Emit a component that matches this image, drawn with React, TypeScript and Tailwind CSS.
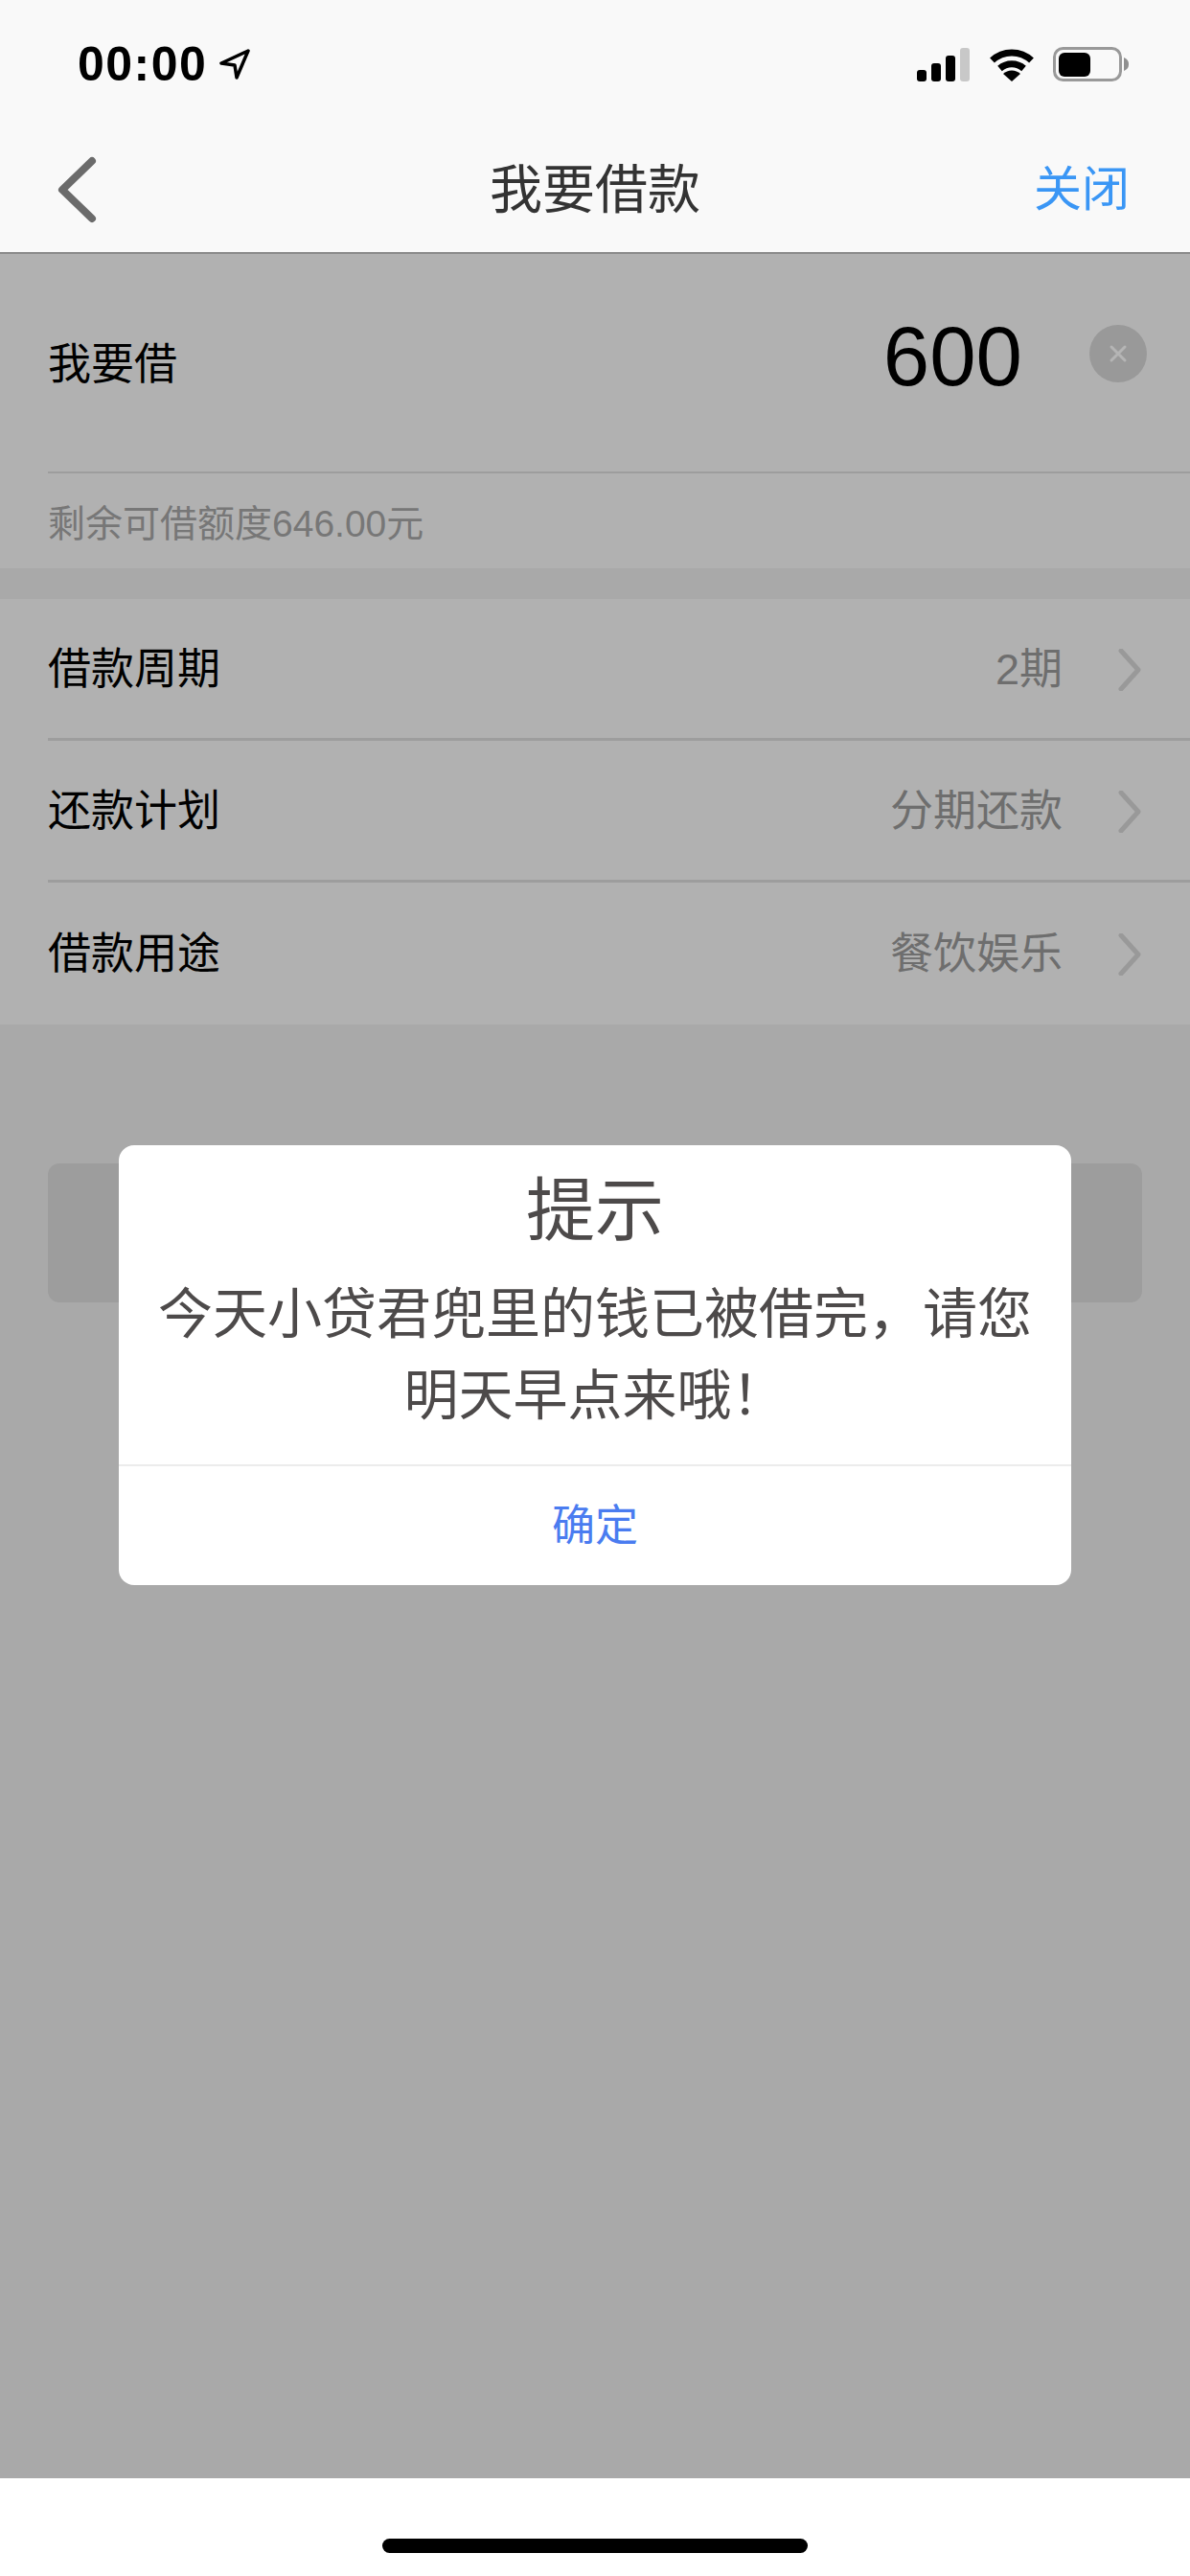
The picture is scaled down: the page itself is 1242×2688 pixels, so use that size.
const cjk = "font-['Liberation_Sans','Noto_Sans_CJK_SC',sans-serif]";

function Chevron() {
  return (
    <svg width="24" height="44" viewBox="0 0 24 44" fill="none" className="shrink-0">
      <path d="M3 2 L21 22 L3 42" stroke="#999999" strokeWidth="5" strokeLinecap="round" strokeLinejoin="round" />
    </svg>
  );
}

function Row({ label, value, border }: { label: string; value: string; border?: boolean }) {
  return (
    <div className="pl-[50px]">
      <div className={`flex items-center h-[148px] pr-[51px] pt-[2px] ${border ? "border-b-[3px] border-[#9d9d9d]" : ""}`}>
        <span className="text-[45px] leading-[60px] text-black">{label}</span>
        <span className="ml-auto text-[45px] leading-[60px] text-[#6e6e6e]">{value}</span>
        <span className="ml-[58px]"><Chevron /></span>
      </div>
    </div>
  );
}

export default function App() {
  return (
    <div className={`relative w-[1242px] h-[2688px] flex flex-col overflow-hidden bg-white ${cjk}`}>
      <header className="h-[265px] shrink-0 bg-[#f9f9f9] border-b-2 border-[#8a8a8a] flex flex-col">
        <div className="h-[132px] flex items-start pt-[40px] pl-[81px] pr-[63px]">
          <span className="font-bold text-[50px] leading-[54px] tracking-[1.5px] text-black">00:00</span>
          <svg width="34" height="34" viewBox="0 0 34 34" fill="none" className="ml-[12px] mt-[10px]">
            <path d="M31 3 L3 16 L17 18 L19 31 Z" stroke="#000" strokeWidth="3.5" strokeLinejoin="round" />
          </svg>
          <div className="ml-auto flex items-start pt-[9px]">
            <svg width="55" height="36" viewBox="0 0 55 36" className="mt-[1px]">
              <rect x="0" y="23" width="10" height="12" rx="3" fill="#000" />
              <rect x="15" y="16" width="10" height="19" rx="3" fill="#000" />
              <rect x="30" y="8" width="10" height="27" rx="3" fill="#000" />
              <rect x="45" y="0" width="10" height="35" rx="3" fill="#c8c8c8" />
            </svg>
            <svg width="48" height="36" viewBox="0 0 48 36" fill="none" className="ml-[20px]">
              <path d="M3.500 14 A 30 30 0 0 1 44.500 14" stroke="#000" strokeWidth="7" />
              <path d="M11.500 22.500 A 19 19 0 0 1 36.500 22.500" stroke="#000" strokeWidth="7" />
              <path d="M24 36 L15 28 A 13 13 0 0 1 33 28 Z" fill="#000" />
            </svg>
            <svg width="80" height="36" viewBox="0 0 80 36" fill="none" className="ml-[19px]">
              <rect x="1.500" y="1.500" width="69" height="33" rx="9" stroke="#999999" strokeWidth="3" />
              <rect x="6" y="6" width="33" height="25" rx="6" fill="#000" />
              <path d="M74 11 C78 13 79 15 79 18 C79 21 78 23 74 25 Z" fill="#8f8f8f" />
            </svg>
          </div>
        </div>
        <div className="relative flex-1 flex items-start justify-center pt-[31px]">
          <svg width="44" height="70" viewBox="0 0 44 70" fill="none" className="absolute left-[59px] top-[31px]">
            <path d="M37 5 L6 35 L37 65" stroke="#6b6b6b" strokeWidth="8" strokeLinecap="round" strokeLinejoin="round" />
          </svg>
          <span className="text-[55px] leading-[70px] text-[#333333]">我要借款</span>
          <span className="absolute right-[63px] top-[33px] text-[50px] leading-[66px] text-[#3a96f5]">关闭</span>
        </div>
      </header>

      <main className="flex-1 bg-[#a9a9a9] flex flex-col">
        <section className="h-[328px] bg-[#b1b1b1] pl-[50px] flex flex-col">
          <div className="h-[229px] border-b-2 border-[#9d9d9d] flex items-start pr-[45px]">
            <span className="mt-[86px] text-[45px] leading-[60px] text-black">我要借</span>
            <span className="ml-auto mt-[57px] text-[87px] leading-[100px] text-black">600</span>
            <span className="ml-[70px] mt-[74px] w-[60px] h-[60px] rounded-full bg-[#999999] flex items-center justify-center">
              <svg width="20" height="20" viewBox="0 0 20 20" fill="none">
                <path d="M3 3 L17 17 M17 3 L3 17" stroke="#b5b5b5" strokeWidth="3" strokeLinecap="round" />
              </svg>
            </span>
          </div>
          <div className="pt-[25px] text-[39px] leading-[56px] text-[#777777]">剩余可借额度646.00元</div>
        </section>

        <section className="mt-[32px] bg-[#b1b1b1] flex flex-col">
          <Row label="借款周期" value="2期" border />
          <Row label="还款计划" value="分期还款" border />
          <Row label="借款用途" value="餐饮娱乐" />
        </section>

        <div className="mt-[145px] mx-[50px] h-[145px] rounded-xl bg-[#9d9d9d]" />
      </main>

      <footer className="h-[102px] shrink-0 bg-white flex justify-center pt-[63px]">
        <div className="w-[444px] h-[15px] rounded-full bg-black" />
      </footer>

      <div className="absolute left-[124px] top-[1195px] w-[994px] h-[459px] rounded-[16px] bg-white flex flex-col">
        <div className="h-[333px] flex flex-col items-center">
          <div className="mt-[18px] text-[72px] leading-[100px] text-[#4d4a4a]">提示</div>
          <div className="mt-[16px] w-[950px] text-center text-[57px] leading-[85px] text-[#4d4a4a]">
            {"今天小贷君兜里的钱已被借完\uFF0C请您"}
            <br />
            {"明天早点来哦\uFF01"}
          </div>
        </div>
        <div className="flex-1 border-t-2 border-[#ececec] flex items-center justify-center pt-[2px]">
          <span className="text-[45px] leading-[60px] text-[#4a7cf0]">确定</span>
        </div>
      </div>
    </div>
  );
}
